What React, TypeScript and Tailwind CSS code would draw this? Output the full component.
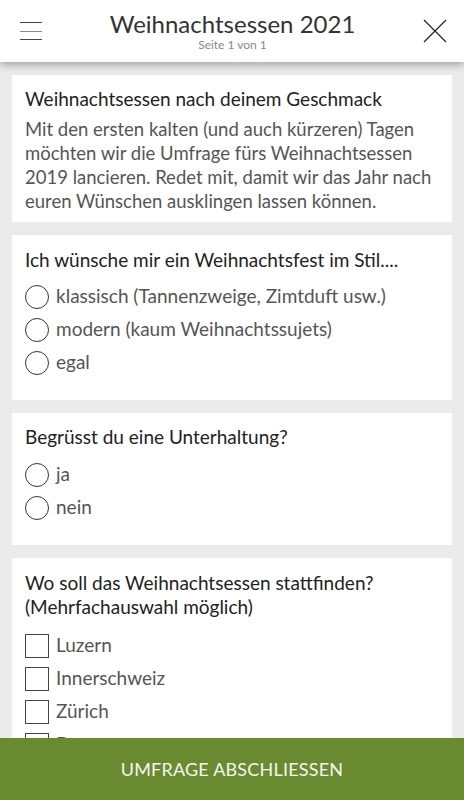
import React from 'react';

const FONT = { fontFamily: 'Lato, "Noto Sans", sans-serif' };

function Radio({ label }: { label: string }) {
  return (
    <label className="flex h-[33px] items-center gap-[7px]">
      <span className="h-[24px] w-[24px] shrink-0 rounded-full border-[1.5px] border-[#333]" />
      <span className="text-[19px] text-[#555]">{label}</span>
    </label>
  );
}

function Check({ label }: { label: string }) {
  return (
    <label className="flex h-[33px] items-center gap-[7px]">
      <span className="h-[24px] w-[24px] shrink-0 border-[1.5px] border-[#444]" />
      <span className="text-[19px] text-[#555]">{label}</span>
    </label>
  );
}

function Card({ children, className = '' }: { children: React.ReactNode; className?: string }) {
  return <section className={`bg-white px-[13px] ${className}`}>{children}</section>;
}

export default function App() {
  return (
    <div className="flex h-[800px] w-[464px] flex-col overflow-hidden bg-[#ebebeb]" style={FONT}>
      {/* Header */}
      <header className="relative z-10 flex h-[62px] shrink-0 items-center justify-between bg-white px-[20px] shadow-[0_3px_8px_rgba(0,0,0,0.3)]">
        <button className="flex w-[22px] flex-col gap-[7.5px]">
          <span className="h-px w-full bg-[#444]" />
          <span className="h-px w-full bg-[#888]" />
          <span className="h-px w-full bg-[#444]" />
        </button>
        <div className="flex flex-col items-center pt-[2px]">
          <h1 className="text-[24px] leading-[26px] text-[#333]">Weihnachtsessen 2021</h1>
          <p className="text-[12px] leading-[16px] text-[#888]">Seite 1 von 1</p>
        </div>
        <button className="mr-[-3px]">
          <svg width="24" height="24" viewBox="0 0 24 24" fill="none" stroke="#222" strokeWidth="1.2">
            <path d="M1 1L23 23M23 1L1 23" />
          </svg>
        </button>
      </header>

      {/* Content */}
      <main className="flex flex-1 flex-col gap-[13px] overflow-hidden px-[12px] pt-[13px]">
        <Card className="pb-[9px] pt-[12px]">
          <h2 className="text-[19px] leading-[24px] text-[#222]">Weihnachtsessen nach deinem Geschmack</h2>
          <p className="mt-[6px] text-[18.5px] leading-[24px] text-[#555]">
            Mit den ersten kalten (und auch kürzeren) Tagen möchten wir die Umfrage fürs Weihnachtsessen 2019 lancieren. Redet mit, damit wir das Jahr nach euren Wünschen ausklingen lassen können.
          </p>
        </Card>

        <Card className="pb-[21px] pt-[13px]">
          <h2 className="text-[19px] leading-[24px] text-[#222]">Ich wünsche mir ein Weihnachtsfest im Stil....</h2>
          <div className="mt-[8px]">
            <Radio label="klassisch (Tannenzweige, Zimtduft usw.)" />
            <Radio label="modern (kaum Weihnachtssujets)" />
            <Radio label="egal" />
          </div>
        </Card>

        <Card className="pb-[21px] pt-[12px]">
          <h2 className="text-[19px] leading-[24px] text-[#222]">Begrüsst du eine Unterhaltung?</h2>
          <div className="mt-[9px]">
            <Radio label="ja" />
            <Radio label="nein" />
          </div>
        </Card>

        <Card className="pb-[21px] pt-[13px]">
          <h2 className="text-[19px] leading-[24px] text-[#222]">
            Wo soll das Weihnachtsessen stattfinden?
            <br />
            (Mehrfachauswahl möglich)
          </h2>
          <div className="mt-[10px]">
            <Check label="Luzern" />
            <Check label="Innerschweiz" />
            <Check label="Zürich" />
            <Check label="Bern" />
          </div>
        </Card>
      </main>

      {/* Footer button */}
      <button className="h-[62px] shrink-0 bg-[#6a8a31] text-[18px] tracking-[0.2px] text-[#f4f6ec]">
        UMFRAGE ABSCHLIESSEN
      </button>
    </div>
  );
}
